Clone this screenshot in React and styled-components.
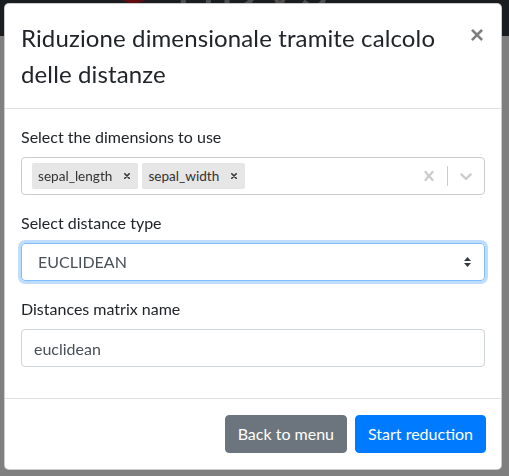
import React, { useState } from 'react';
import styled, { createGlobalStyle } from 'styled-components';

const GlobalStyle = createGlobalStyle`
  * { box-sizing: border-box; }
  html, body { margin: 0; padding: 0; }
  body {
    font-family: Lato, "Liberation Sans", sans-serif;
    font-size: 16px;
    line-height: 1.5;
    color: #212529;
    background: #fff;
    height: 476px;
    overflow: hidden;
  }
`;

const Page = styled.div`
  height: 476px;
  background: #fff;
`;

const Navbar = styled.nav`
  height: 36px;
  background: #343a40;
  display: flex;
  padding-left: 112px;
`;

const BrandPeek = styled.div`
  height: 3px;
  overflow: hidden;
  display: flex;
  align-items: flex-end;
  gap: 20px;
`;

const Logo = styled.div`
  width: 44px;
  height: 40px;
  border-radius: 50%;
  background: #c4161c;
  flex-shrink: 0;
`;

const BrandText = styled.span`
  font-size: 52px;
  line-height: 1;
  color: #9a9a9a;
  letter-spacing: 4px;
  margin-bottom: -11px;
`;

const Backdrop = styled.div`
  position: fixed;
  inset: 0;
  background: rgba(0, 0, 0, 0.5);
  padding: 3px 7px 0 4px;
`;

const Modal = styled.div`
  width: 498px;
  background: #fff;
  border: 1px solid rgba(0, 0, 0, 0.2);
  border-radius: 5px;
  display: flex;
  flex-direction: column;
`;

const Header = styled.div`
  display: flex;
  align-items: flex-start;
  justify-content: space-between;
  padding: 16px 16px 16px;
  border-bottom: 1px solid #dee2e6;
`;

const Title = styled.h4`
  margin: 0;
  font-size: 24px;
  font-weight: 400;
  line-height: 36px;
  letter-spacing: 0.12px;
`;

const Close = styled.button`
  border: 0;
  background: transparent;
  padding: 0;
  margin: 3px 1px 0 0;
  font-family: "Liberation Sans", sans-serif;
  font-size: 24px;
  font-weight: 700;
  line-height: 1;
  color: #000;
  opacity: 0.5;
  cursor: pointer;
`;

const Body = styled.div`
  padding: 16px 16px 0;
`;

const Group = styled.div`
  margin-bottom: 16px;
`;

const Label = styled.label`
  display: block;
  margin-bottom: 8px;
`;

const MultiBox = styled.div`
  display: flex;
  align-items: center;
  height: 38px;
  border: 1px solid #ccc;
  border-radius: 4px;
  background: #fff;
`;

const Chips = styled.div`
  flex: 1;
  display: flex;
  align-items: center;
  gap: 4px;
  padding: 0 10px;
`;

const Chip = styled.div`
  display: flex;
  align-items: center;
  height: 26px;
  background: #e6e6e6;
  border-radius: 2px;
  font-size: 13.6px;
  color: #333;
  padding-left: 6px;
`;

const ChipRemove = styled.span`
  display: flex;
  align-items: center;
  padding: 0 8px 0 12px;
  height: 100%;
  color: #333;
`;

const Indicators = styled.div`
  display: flex;
  align-items: center;
  align-self: stretch;
`;

const IndicatorBtn = styled.div`
  display: flex;
  align-items: center;
  padding: 0 8px;
  color: #ccc;
`;

const Separator = styled.span`
  width: 1px;
  align-self: stretch;
  margin: 8px 0;
  background: #ccc;
`;

const SelectBox = styled.div`
  display: flex;
  align-items: center;
  justify-content: space-between;
  height: 38px;
  padding: 0 12px 0 16px;
  border: 1px solid #80bdff;
  border-radius: 4px;
  box-shadow: 0 0 0 3px rgba(0, 123, 255, 0.25);
  color: #495057;
  font-size: 16px;
`;

const Input = styled.input`
  display: block;
  width: 100%;
  height: 38px;
  padding: 6px 12px;
  font-family: inherit;
  font-size: 16px;
  color: #495057;
  border: 1px solid #ced4da;
  border-radius: 4px;
  outline: none;
`;

const Footer = styled.div`
  display: flex;
  justify-content: flex-end;
  align-items: center;
  gap: 8px;
  padding: 16px 15px 16px;
  border-top: 1px solid #dee2e6;
  margin-top: 15px;
`;

const Button = styled.button`
  height: 38px;
  padding: 0 12px;
  font-family: inherit;
  font-size: 16px;
  line-height: 1.5;
  color: #fff;
  border: 1px solid ${(p) => (p.$primary ? '#007bff' : '#6c757d')};
  background: ${(p) => (p.$primary ? '#007bff' : '#6c757d')};
  border-radius: 4px;
  cursor: pointer;
`;

const SmallX = () => (
  <svg width="6" height="6" viewBox="0 0 6 6">
    <path d="M0.8 0.8L5.2 5.2M5.2 0.8L0.8 5.2" stroke="currentColor" strokeWidth="1.6" strokeLinecap="round" />
  </svg>
);

const ClearX = () => (
  <svg width="20" height="20" viewBox="0 0 20 20" fill="currentColor">
    <path d="M14.348 14.849c-0.469 0.469-1.229 0.469-1.697 0l-2.651-3.030-2.651 3.029c-0.469 0.469-1.229 0.469-1.697 0-0.469-0.469-0.469-1.229 0-1.697l2.758-3.15-2.759-3.152c-0.469-0.469-0.469-1.228 0-1.697s1.228-0.469 1.697 0l2.652 3.031 2.651-3.031c0.469-0.469 1.228-0.469 1.697 0s0.469 1.229 0 1.697l-2.758 3.152 2.758 3.150c0.469 0.469 0.469 1.229 0 1.698z" />
  </svg>
);

const Chevron = () => (
  <svg width="20" height="20" viewBox="0 0 20 20" fill="currentColor">
    <path d="M4.516 7.548c0.436-0.446 1.043-0.481 1.576 0l3.908 3.747 3.908-3.747c0.533-0.481 1.141-0.446 1.574 0 0.436 0.445 0.408 1.197 0 1.615-0.406 0.418-4.695 4.502-4.695 4.502-0.217 0.223-0.502 0.335-0.787 0.335s-0.57-0.112-0.789-0.335c0 0-4.287-4.084-4.695-4.502s-0.436-1.170 0-1.615z" />
  </svg>
);

const UpDown = () => (
  <svg width="9" height="12" viewBox="0 0 9 12" fill="#343a40">
    <path d="M4.5 1L8 5H1z M4.5 11L1 7h7z" />
  </svg>
);

export default function App() {
  const [dims] = useState(['sepal_length', 'sepal_width']);
  const [name, setName] = useState('euclidean');

  return (
    <Page>
      <GlobalStyle />
      <Navbar>
        <BrandPeek>
          <Logo />
          <BrandText>HDVS</BrandText>
        </BrandPeek>
      </Navbar>
      <Backdrop>
        <Modal>
          <Header>
            <Title>Riduzione dimensionale tramite calcolo delle distanze</Title>
            <Close>×</Close>
          </Header>
          <Body>
            <Group>
              <Label>Select the dimensions to use</Label>
              <MultiBox>
                <Chips>
                  {dims.map((d) => (
                    <Chip key={d}>
                      {d}
                      <ChipRemove>
                        <SmallX />
                      </ChipRemove>
                    </Chip>
                  ))}
                </Chips>
                <Indicators>
                  <IndicatorBtn>
                    <ClearX />
                  </IndicatorBtn>
                  <Separator />
                  <IndicatorBtn>
                    <Chevron />
                  </IndicatorBtn>
                </Indicators>
              </MultiBox>
            </Group>
            <Group>
              <Label>Select distance type</Label>
              <SelectBox>
                EUCLIDEAN
                <UpDown />
              </SelectBox>
            </Group>
            <Group>
              <Label>Distances matrix name</Label>
              <Input value={name} onChange={(e) => setName(e.target.value)} />
            </Group>
          </Body>
          <Footer>
            <Button>Back to menu</Button>
            <Button $primary>Start reduction</Button>
          </Footer>
        </Modal>
      </Backdrop>
    </Page>
  );
}
